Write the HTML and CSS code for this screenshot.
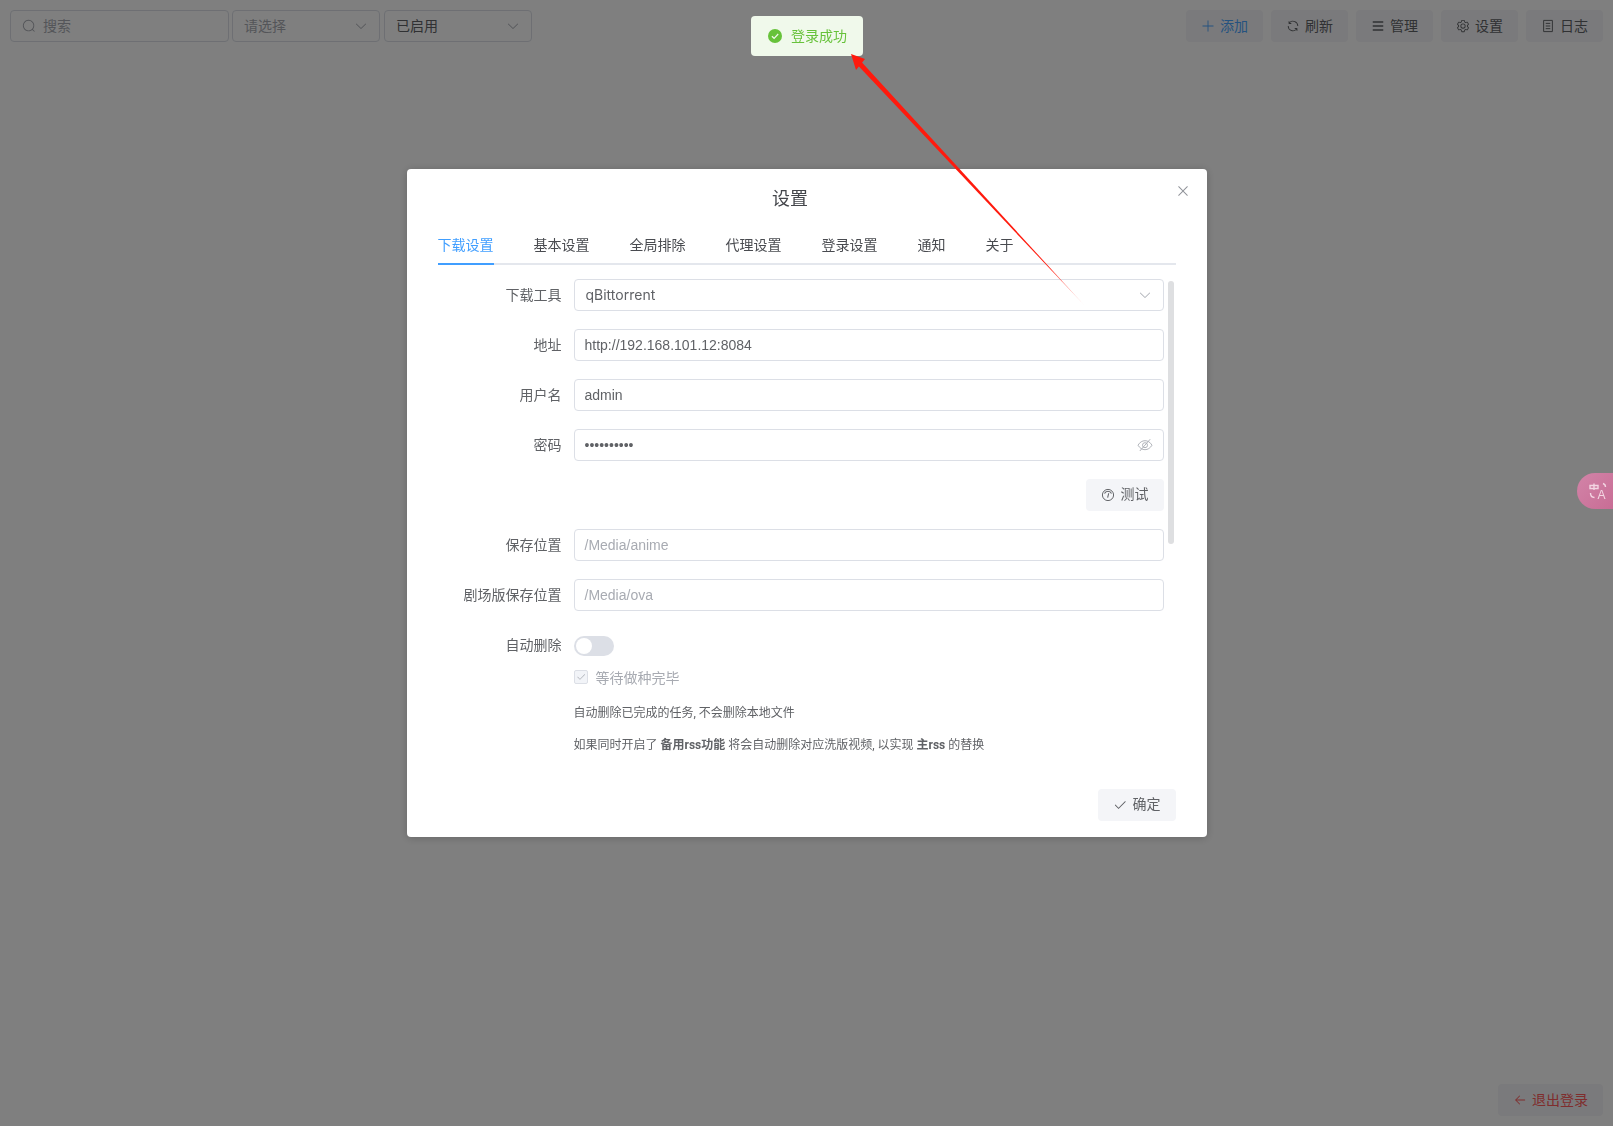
FILE: index.html
```html
<!doctype html>
<html lang="en">
    <head>
        <meta charset="UTF-8" />
        <title>设置</title>
        <link rel="stylesheet" href="styles.css">
    </head>
    <body>
        <svg width="0" height="0" class="icon-defs">
            <symbol id="i-search" viewBox="0 0 1024 1024"><path fill="currentColor" d="m795.904 750.72 124.992 124.928a32 32 0 0 1-45.248 45.248L750.656 795.904a416 416 0 1 1 45.248-45.248zM480 832a352 352 0 1 0 0-704 352 352 0 0 0 0 704z"/></symbol>
            <symbol id="i-down" viewBox="0 0 1024 1024"><path fill="currentColor" d="M831.872 340.864 512 652.672 192.128 340.864a30.592 30.592 0 0 0-42.752 0 29.12 29.12 0 0 0 0 41.6L489.664 714.24a32 32 0 0 0 44.672 0l340.288-331.712a29.12 29.12 0 0 0 0-41.728 30.592 30.592 0 0 0-42.752 0z"/></symbol>
            <symbol id="i-plus" viewBox="0 0 1024 1024"><path fill="currentColor" d="M480 480V128a32 32 0 0 1 64 0v352h352a32 32 0 1 1 0 64H544v352a32 32 0 1 1-64 0V544H128a32 32 0 0 1 0-64h352z"/></symbol>
            <symbol id="i-close" viewBox="0 0 1024 1024"><path fill="currentColor" d="M764.288 214.592 512 466.88 259.712 214.592a31.936 31.936 0 0 0-45.12 45.12L466.752 512 214.528 764.224a31.936 31.936 0 1 0 45.12 45.184L512 557.184l252.288 252.288a31.936 31.936 0 0 0 45.12-45.12L557.12 512.064l252.288-252.352a31.936 31.936 0 1 0-45.12-45.184z"/></symbol>
            <symbol id="i-check" viewBox="0 0 1024 1024"><path fill="currentColor" d="M406.656 706.944 195.84 496.256a32 32 0 1 0-45.248 45.248l256 256 512-512a32 32 0 0 0-45.248-45.248L406.592 706.944z"/></symbol>
            <symbol id="i-back" viewBox="0 0 1024 1024"><path fill="currentColor" d="M224 480h640a32 32 0 1 1 0 64H224a32 32 0 0 1 0-64z"/><path fill="currentColor" d="m237.248 512 265.408 265.344a32 32 0 0 1-45.312 45.312l-288-288a32 32 0 0 1 0-45.312l288-288a32 32 0 1 1 45.312 45.312L237.248 512z"/></symbol>
            <symbol id="i-refresh" viewBox="0 0 1024 1024"><path fill="currentColor" d="M771.776 794.88A384 384 0 0 1 128 512h64a320 320 0 0 0 555.712 216.448H654.72a32 32 0 1 1 0-64h149.056a32 32 0 0 1 32 32v148.928a32 32 0 1 1-64 0v-50.56zM276.288 295.616h92.992a32 32 0 0 1 0 64H220.16a32 32 0 0 1-32-32V178.56a32 32 0 0 1 64 0v50.56A384 384 0 0 1 896.128 512h-64a320 320 0 0 0-555.776-216.384z"/></symbol>
            <symbol id="i-manage" viewBox="0 0 16 16"><path fill="none" stroke="currentColor" stroke-width="1.6" d="M2 3.400h12M2 8h12M2 12.600h12"/></symbol>
            <symbol id="i-gear" viewBox="0 0 1024 1024"><path fill="currentColor" d="M600.704 64a32 32 0 0 1 30.464 22.208l35.2 109.376c14.784 7.232 28.928 15.36 42.432 24.512l112.384-24.192a32 32 0 0 1 34.432 15.36L944.32 364.8a32 32 0 0 1-4.032 37.504l-77.12 85.12a357.12 357.12 0 0 1 0 49.024l77.12 85.248a32 32 0 0 1 4.032 37.504l-88.704 153.6a32 32 0 0 1-34.432 15.296L708.8 803.904c-13.44 9.088-27.648 17.28-42.368 24.512l-35.264 109.376A32 32 0 0 1 600.704 960H423.296a32 32 0 0 1-30.464-22.208L357.696 828.48a351.616 351.616 0 0 1-42.56-24.64l-112.32 24.256a32 32 0 0 1-34.432-15.36L79.68 659.2a32 32 0 0 1 4.032-37.504l77.12-85.248a357.12 357.12 0 0 1 0-48.896l-77.12-85.248A32 32 0 0 1 79.68 364.8l88.704-153.6a32 32 0 0 1 34.432-15.296l112.32 24.256c13.568-9.152 27.776-17.408 42.56-24.64l35.2-109.312A32 32 0 0 1 423.232 64H600.64zm-23.424 64H446.72l-36.352 113.088-24.512 11.968a294.113 294.113 0 0 0-34.816 20.096l-22.656 15.36-116.224-25.088-65.28 113.152 79.68 88.192-1.92 27.136a293.12 293.12 0 0 0 0 40.192l1.92 27.136-79.808 88.192 65.344 113.152 116.224-25.024 22.656 15.296a294.113 294.113 0 0 0 34.816 20.096l24.512 11.968L446.72 896h130.688l36.48-113.152 24.448-11.904a288.282 288.282 0 0 0 34.752-20.096l22.592-15.296 116.288 25.024 65.28-113.152-79.744-88.192 1.92-27.136a293.12 293.12 0 0 0 0-40.256l-1.92-27.136 79.808-88.128-65.344-113.152-116.288 24.96-22.592-15.232a287.616 287.616 0 0 0-34.752-20.096l-24.448-11.904L577.344 128zM512 320a192 192 0 1 1 0 384 192 192 0 0 1 0-384zm0 64a128 128 0 1 0 0 256 128 128 0 0 0 0-256z"/></symbol>
            <symbol id="i-doc" viewBox="0 0 16 16"><path fill="none" stroke="currentColor" stroke-width="1.1" d="M3 1.600h10v12.800H3zM5.400 5h5.200M5.400 8h5.200M5.400 11h5.200"/></symbol>
            <symbol id="i-gauge" viewBox="0 0 16 16"><circle cx="8" cy="8" r="6.400" fill="none" stroke="currentColor" stroke-width="1.100"/><path fill="none" stroke="currentColor" stroke-width="1.200" d="M4 6.200A4.400 4.400 0 0 1 12 6.200M8.800 6 7.600 11"/></symbol>
            <symbol id="i-hide" viewBox="0 0 16 16"><path fill="none" stroke="currentColor" stroke-width="0.900" d="M1 8.200C2.800 5.200 5.300 3.700 8 3.700s5.200 1.500 7 4.500c-1.800 3-4.300 4.500-7 4.500s-5.200-1.500-7-4.500z"/><circle cx="8" cy="8.200" r="2.500" fill="none" stroke="currentColor" stroke-width="0.900"/><path fill="none" stroke="currentColor" stroke-width="0.900" d="M13.200 2.200 2.800 14"/></symbol>
        </svg>

        <!-- page behind the dialog -->
        <div class="page">
            <div class="toolbar">
                <div class="filters">
                    <div class="field field-search">
                        <svg class="icon"><use href="#i-search"/></svg>
                        <span class="placeholder">搜索</span>
                    </div>
                    <div class="field field-select">
                        <span class="placeholder">请选择</span>
                        <svg class="icon"><use href="#i-down"/></svg>
                    </div>
                    <div class="field field-select field-status">
                        <span>已启用</span>
                        <svg class="icon"><use href="#i-down"/></svg>
                    </div>
                </div>
                <div class="actions">
                    <button class="button button-primary"><svg class="icon"><use href="#i-plus"/></svg><span>添加</span></button>
                    <button class="button"><svg class="icon"><use href="#i-refresh"/></svg><span>刷新</span></button>
                    <button class="button"><svg class="icon"><use href="#i-manage"/></svg><span>管理</span></button>
                    <button class="button"><svg class="icon"><use href="#i-gear"/></svg><span>设置</span></button>
                    <button class="button"><svg class="icon"><use href="#i-doc"/></svg><span>日志</span></button>
                </div>
            </div>
            <div class="page-footer">
                <button class="button button-danger"><svg class="icon"><use href="#i-back"/></svg><span>退出登录</span></button>
            </div>
        </div>

        <div class="overlay">
            <div class="dialog">
                <div class="dialog-header">
                    <span class="dialog-title">设置</span>
                    <svg class="dialog-close"><use href="#i-close"/></svg>
                </div>

                <div class="tabs">
                    <span class="tab tab-active">下载设置</span>
                    <span class="tab">基本设置</span>
                    <span class="tab">全局排除</span>
                    <span class="tab">代理设置</span>
                    <span class="tab">登录设置</span>
                    <span class="tab">通知</span>
                    <span class="tab">关于</span>
                </div>

                <div class="form">
                    <div class="scroll-thumb"></div>

                    <div class="row">
                        <label class="row-label">下载工具</label>
                        <div class="input input-select">
                            <span class="select-value">qBittorrent</span>
                            <svg class="icon"><use href="#i-down"/></svg>
                        </div>
                    </div>
                    <div class="row">
                        <label class="row-label">地址</label>
                        <div class="input">http://192.168.101.12:8084</div>
                    </div>
                    <div class="row">
                        <label class="row-label">用户名</label>
                        <div class="input">admin</div>
                    </div>
                    <div class="row">
                        <label class="row-label">密码</label>
                        <div class="input input-select">
                            <span>••••••••••</span>
                            <svg class="icon icon-eye"><use href="#i-hide"/></svg>
                        </div>
                    </div>
                    <div class="row row-end">
                        <button class="button button-wide"><svg class="icon"><use href="#i-gauge"/></svg><span>测试</span></button>
                    </div>
                    <div class="row">
                        <label class="row-label">保存位置</label>
                        <div class="input placeholder">/Media/anime</div>
                    </div>
                    <div class="row">
                        <label class="row-label">剧场版保存位置</label>
                        <div class="input placeholder">/Media/ova</div>
                    </div>
                    <div class="row row-switch">
                        <label class="row-label">自动删除</label>
                        <div class="row-body">
                            <div class="switch"><span class="switch-knob"></span></div>
                            <div class="checkbox">
                                <span class="checkbox-box"><svg class="icon"><use href="#i-check"/></svg></span>
                                等待做种完毕
                            </div>
                            <p class="hint">自动删除已完成的任务, 不会删除本地文件</p>
                            <p class="hint">如果同时开启了 <b>备用rss功能</b> 将会自动删除对应洗版视频, 以实现 <b>主rss</b> 的替换</p>
                        </div>
                    </div>
                </div>

                <div class="dialog-footer">
                    <button class="button button-wide"><svg class="icon"><use href="#i-check"/></svg><span>确定</span></button>
                </div>
            </div>
        </div>

        <div class="message">
            <svg class="message-icon" viewBox="0 0 16 16">
                <circle cx="8" cy="8" r="7" fill="#67c23a"/>
                <path d="M4.900 8.200 7.100 10.300 11.200 6" fill="none" stroke="#f0f9eb" stroke-width="1.200"/>
            </svg>
            <span>登录成功</span>
        </div>

        <!-- pill from the translate extension -->
        <div class="translate-pill">
            <svg viewBox="0 0 20 20" class="translate-icon">
                <path fill="none" stroke="currentColor" stroke-width="1.400" d="M6 2.500v6.500M2 4.500h8v3H2zM2.500 12c0 3 1.500 4.500 4 4.500M15 2.500c1.500.5 2.500 2 2.500 3.500"/>
                <text x="9.500" y="18" class="translate-letter">A</text>
            </svg>
        </div>

        <!-- annotation arrow drawn on the screenshot -->
        <svg class="annotation" viewBox="0 0 1613 1126">
            <defs>
                <linearGradient id="fade" gradientUnits="userSpaceOnUse" x1="851" y1="54" x2="1085" y2="306">
                    <stop offset="0" stop-color="#ff1a0d"/>
                    <stop offset="0.85" stop-color="#ff1a0d"/>
                    <stop offset="1" stop-color="#ff1a0d" stop-opacity="0.15"/>
                </linearGradient>
            </defs>
            <polygon fill="url(#fade)" points="858.200,65.700 861.800,62.300 1085,306"/>
            <polygon fill="#ff1a0d" points="851,54 865,59 856,70"/>
        </svg>
    </body>
</html>
```

FILE: styles.css
```css
* {
    margin: 0;
    padding: 0;
    box-sizing: border-box;
}
body {
    font-family: "Inter", "Noto Sans CJK SC", sans-serif;
    font-size: 14px;
    color: #606266;
    background-color: #ffffff;
    height: 100vh;
    overflow: hidden;
}
.icon-defs {
    display: block;
    height: 0;
}
.icon {
    width: 14px;
    height: 14px;
    flex: none;
}
.placeholder {
    color: #a8abb2;
}

/* page */
.page {
    height: 100vh;
    padding: 10px;
    display: flex;
    flex-direction: column;
    justify-content: space-between;
}
.toolbar {
    display: flex;
    justify-content: space-between;
}
.filters {
    display: flex;
    gap: 3px;
}
.actions {
    display: flex;
    gap: 8px;
}
.field {
    height: 32px;
    border: 1px solid #dcdfe6;
    border-radius: 4px;
    padding: 0 11px;
    display: flex;
    align-items: center;
}
.field span {
    margin-bottom: 2px;
}
.field .icon {
    color: #a8abb2;
}
.field-search {
    width: 219px;
    gap: 7px;
}
.field-select {
    width: 148px;
    justify-content: space-between;
}
.field-status {
    margin-left: 1px;
}
.page-footer {
    display: flex;
    justify-content: flex-end;
}

/* buttons */
.button {
    height: 32px;
    padding: 0 15px;
    border: none;
    border-radius: 4px;
    background-color: #f4f5f8;
    color: #606266;
    font: inherit;
    display: inline-flex;
    align-items: center;
    gap: 5px;
}
.button span {
    margin-bottom: 2px;
}
.button-wide {
    gap: 6px;
}
.button-wide span {
    margin-bottom: 4px;
}
.button-primary {
    color: #4aa5ff;
}
.button-danger {
    color: #ff5a5a;
}

/* dialog */
.overlay {
    position: fixed;
    inset: 0;
    background-color: rgba(0, 0, 0, 0.5);
}
.dialog {
    width: 800px;
    height: 668px;
    margin: 169px auto 0;
    padding: 0 31px;
    background-color: #ffffff;
    border-radius: 4px;
    box-shadow: 0 1px 8px rgba(0, 0, 0, 0.2);
    position: relative;
}
.dialog-header {
    height: 56px;
    padding-right: 33px;
    display: flex;
    align-items: center;
    justify-content: center;
}
.dialog-title {
    font-size: 18px;
    color: #44464b;
}
.dialog-close {
    position: absolute;
    top: 14px;
    right: 16px;
    width: 16px;
    height: 16px;
    color: #909399;
}
.tabs {
    margin-bottom: 14px;
    display: flex;
    gap: 40px;
    height: 40px;
    border-bottom: 2px solid #e4e7ed;
}
.tab {
    height: 40px;
    line-height: 40px;
    color: #494b50;
}
.tab-active {
    color: #409eff;
    border-bottom: 2px solid #409eff;
}

/* form */
.form {
    position: relative;
    height: 510px;
}
.scroll-thumb {
    position: absolute;
    top: 2px;
    right: 2px;
    width: 6px;
    height: 263px;
    border-radius: 3px;
    background-color: #dedfe1;
}
.row {
    display: flex;
    gap: 12px;
    margin-bottom: 18px;
    margin-right: 12px;
}
.row-end {
    justify-content: flex-end;
}
.row-label {
    width: 124px;
    height: 32px;
    line-height: 32px;
    text-align: right;
    flex: none;
}
.input {
    flex: 1;
    height: 32px;
    line-height: 30px;
    border: 1px solid #dcdfe6;
    border-radius: 4px;
    padding: 0 11px 0 10px;
    font-family: "Liberation Sans", "Noto Sans CJK SC", sans-serif;
}
.input-select {
    display: flex;
    align-items: center;
    justify-content: space-between;
}
.select-value {
    margin-left: 1px;
    font-family: "Inter", sans-serif;
}
.input-select .icon {
    color: #a8abb2;
}
.input-select .icon-eye {
    width: 16px;
    height: 16px;
    margin-right: -1px;
}
.row-body {
    flex: 1;
}
.switch {
    width: 40px;
    height: 20px;
    margin-top: 7px;
    padding: 2px;
    border-radius: 10px;
    background-color: #dcdfe6;
}
.switch-knob {
    display: block;
    width: 16px;
    height: 16px;
    border-radius: 50%;
    background-color: #ffffff;
}
.checkbox {
    height: 32px;
    margin-top: 5px;
    display: flex;
    align-items: center;
    gap: 8px;
    color: #a8abb2;
}
.checkbox-box {
    width: 14px;
    height: 14px;
    border: 1px solid #dcdfe6;
    border-radius: 2px;
    background-color: #f2f4f8;
    display: flex;
    align-items: center;
    justify-content: center;
}
.checkbox-box .icon {
    width: 10px;
    height: 10px;
}
.hint {
    margin-top: 12px;
    font-family: "Roboto", "Noto Sans CJK SC", sans-serif;
    font-size: 12px;
    line-height: 20px;
}
.checkbox + .hint {
    margin-top: 10px;
}
.dialog-footer {
    display: flex;
    justify-content: flex-end;
}

/* toast */
.message {
    position: fixed;
    top: 16px;
    left: 751px;
    width: 112px;
    height: 40px;
    padding-left: 16px;
    display: flex;
    align-items: center;
    gap: 8px;
    border-radius: 4px;
    background-color: #f0f9eb;
    color: #67c23a;
}
.message span {
    margin-bottom: 2px;
}
.message-icon {
    width: 16px;
    height: 16px;
    flex: none;
}

/* extension pill */
.translate-pill {
    position: fixed;
    top: 473px;
    right: 0;
    width: 36px;
    height: 36px;
    padding: 8px 0 0 11px;
    border-radius: 18px 0 0 18px;
    background: linear-gradient(135deg, #d284a8, #c86d95);
    color: #f3d5e2;
}
.translate-icon {
    display: block;
    width: 20px;
    height: 20px;
}
.translate-letter {
    font-family: "Liberation Sans", sans-serif;
    font-size: 12px;
    fill: currentColor;
}

/* arrow */
.annotation {
    position: fixed;
    inset: 0;
    width: 100%;
    height: 100%;
    pointer-events: none;
}
```
